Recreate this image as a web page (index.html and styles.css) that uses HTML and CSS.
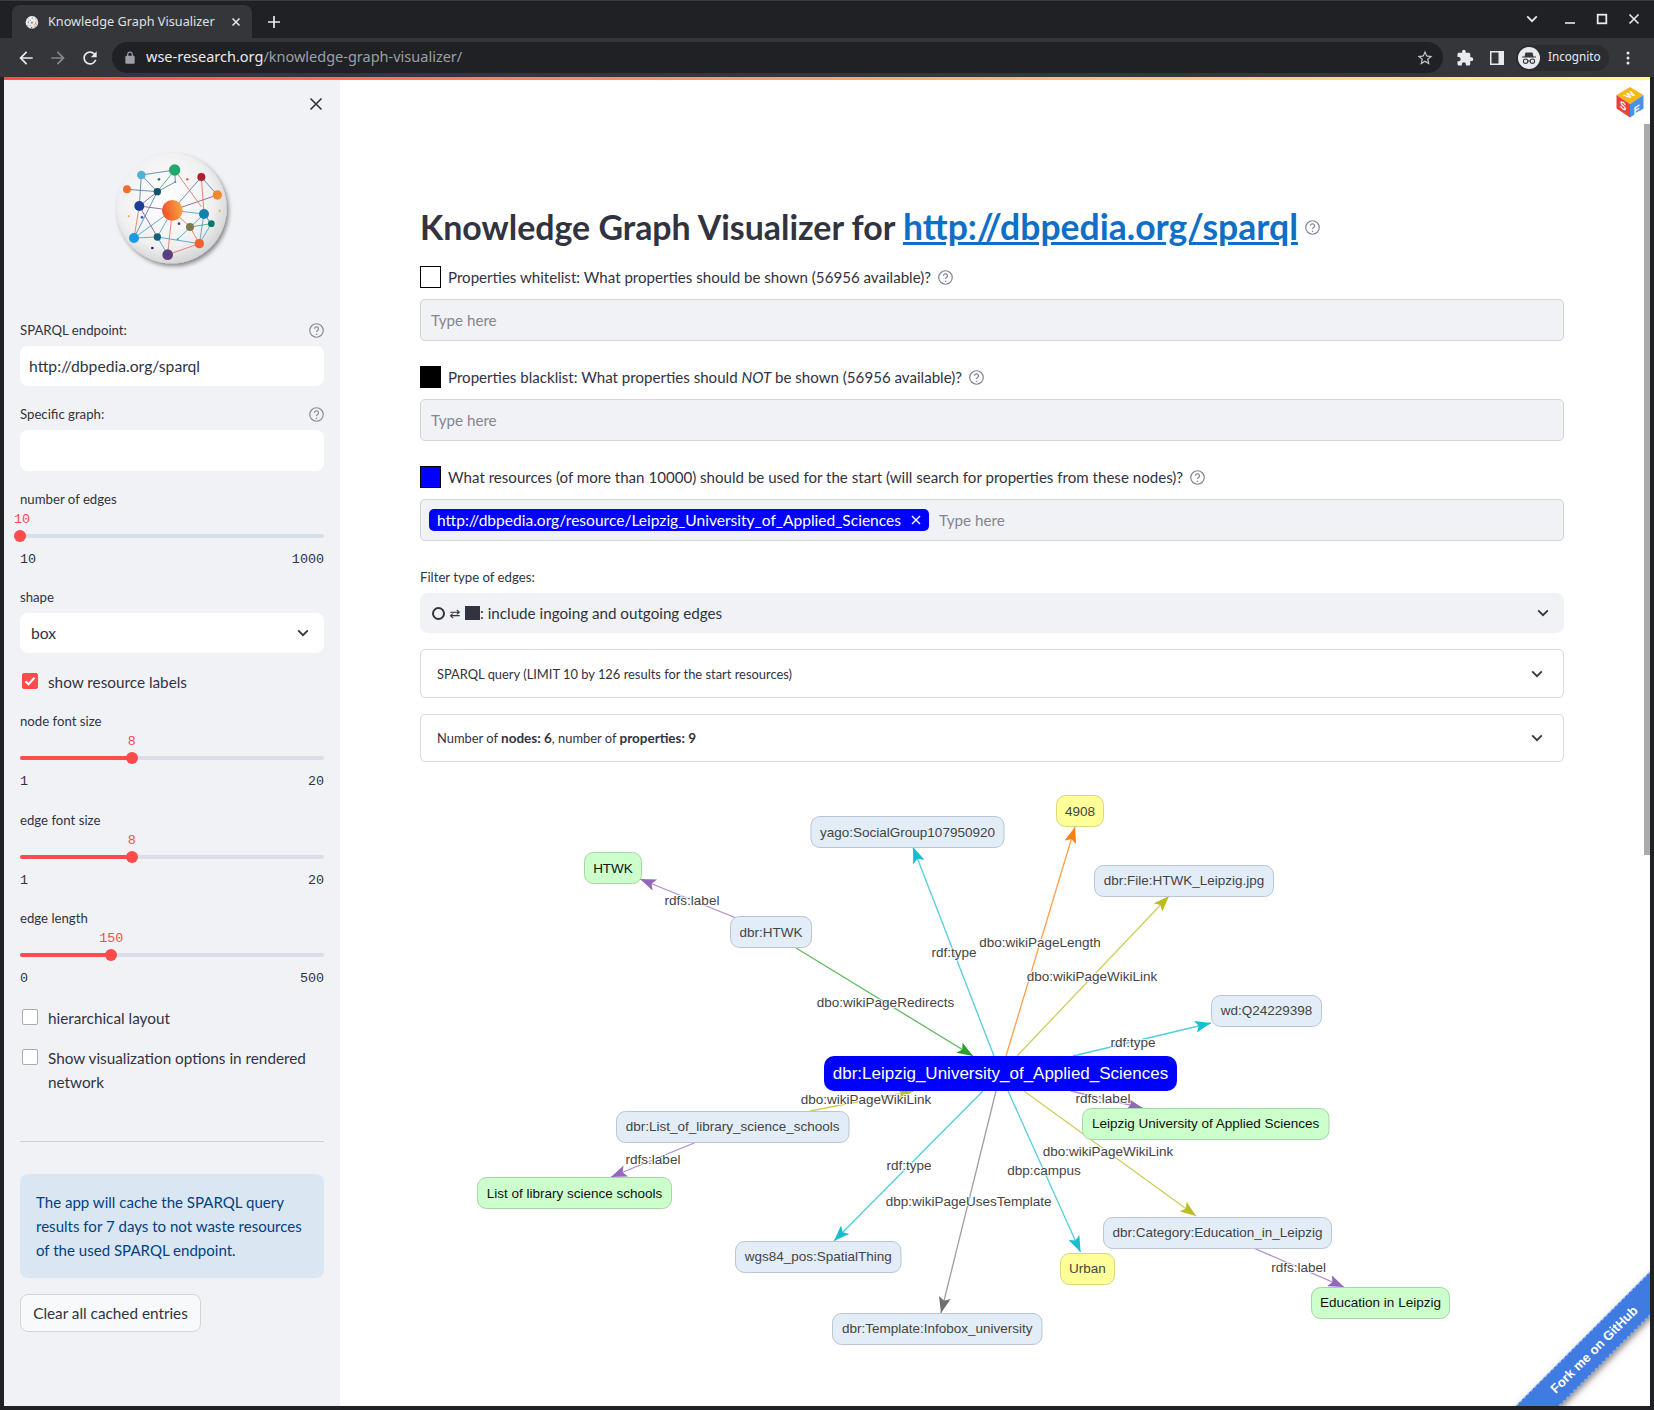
FILE: index.html
```html
<!DOCTYPE html>
<html lang="en">
<head>
    <meta charset="UTF-8">
    <title>Knowledge Graph Visualizer</title>
    <link rel="stylesheet" href="styles.css">
</head>
<body>
    <svg class="defs" width="0" height="0">
        <defs>
            <radialGradient id="discFill" cx="45%" cy="42%" r="62%">
                <stop offset="0" stop-color="#ffffff"/>
                <stop offset="0.7" stop-color="#f0f0f0"/>
                <stop offset="1" stop-color="#cfcfcf"/>
            </radialGradient>
            <linearGradient id="hubFill" x1="0" y1="0.6" x2="1" y2="0.4">
                <stop offset="0" stop-color="#ef4f2b"/>
                <stop offset="1" stop-color="#f9a63f"/>
            </linearGradient>
            <filter id="discShadow" x="-20%" y="-20%" width="150%" height="150%">
                <feDropShadow dx="6" dy="8" stdDeviation="6" flood-color="#000" flood-opacity="0.45"/>
            </filter>
            <symbol id="graphLogo" viewBox="6 0 420 390">
                <circle cx="215" cy="205" r="165" fill="url(#discFill)" filter="url(#discShadow)"/>
                <g stroke-width="2.5" fill="none">
                    <path stroke="#4d7ea8" d="M124 105L224 90M124 105L172 155M224 90L226 126L172 155M81 148L172 155M118 198L124 105M102 294L172 155M304 111L217 211M304 111L352 165"/>
                    <path stroke="#3da877" d="M172 155L224 90M270 261L334 251"/>
                    <path stroke="#7a5a90" d="M118 198L217 211M118 198L172 291M352 165L217 211M312 222L334 251M118 198L172 155"/>
                    <path stroke="#e2705e" d="M304 111L312 222M224 90L304 200M118 198L102 294M217 211L203 344M298 311L203 344M270 261L217 211M298 311L270 261"/>
                    <path stroke="#4d9ac4" d="M102 294L217 211M102 294L172 291L298 311M172 291L217 211M312 222L217 211M312 222L233 298M172 291L203 344M312 222L298 311M334 251L298 311"/>
                </g>
                <circle cx="124" cy="105" r="13" fill="#4fb3d8"/>
                <circle cx="224" cy="90" r="17" fill="#22a86a"/>
                <circle cx="304" cy="111" r="12" fill="#b51c2c"/>
                <circle cx="352" cy="165" r="14" fill="#f08a2c"/>
                <circle cx="81" cy="148" r="12" fill="#f0702a"/>
                <circle cx="172" cy="155" r="11" fill="#15506e"/>
                <circle cx="118" cy="198" r="15" fill="#1c3f94"/>
                <circle cx="217" cy="211" r="31" fill="url(#hubFill)"/>
                <circle cx="312" cy="222" r="15" fill="#0d83b0"/>
                <circle cx="334" cy="251" r="10" fill="#0b7a6e"/>
                <circle cx="270" cy="261" r="12" fill="#7a7a4a"/>
                <circle cx="102" cy="294" r="15" fill="#1a9be0"/>
                <circle cx="172" cy="291" r="11" fill="#15607a"/>
                <circle cx="298" cy="311" r="14" fill="#f0602a"/>
                <circle cx="203" cy="344" r="16" fill="#5a3f80"/>
                <circle cx="177" cy="118" r="4" fill="#2a7a60"/>
                <circle cx="262" cy="118" r="4" fill="#e66a5a"/>
                <circle cx="86" cy="229" r="3" fill="#f0a050"/>
                <circle cx="126" cy="232" r="4" fill="#2060b0"/>
                <circle cx="237" cy="251" r="4" fill="#503080"/>
                <circle cx="359" cy="212" r="3" fill="#f0a040"/>
                <circle cx="157" cy="324" r="4" fill="#203060"/>
                <circle cx="226" cy="126" r="3" fill="#4a90c0"/>
                <circle cx="233" cy="298" r="3" fill="#4a90c0"/>
            </symbol>
            <symbol id="helpIcon" viewBox="0 0 24 24">
                <circle cx="12" cy="12" r="10.800" fill="none" stroke="currentColor" stroke-width="1.900"/>
                <path d="M8.800 9.300a3.200 3.200 0 1 1 4.900 2.700c-1.100.7-1.700 1.300-1.700 2.500" fill="none" stroke="currentColor" stroke-width="2"/>
                <circle cx="12" cy="18" r="1.300" fill="currentColor"/>
            </symbol>
            <symbol id="chevron" viewBox="0 0 12 8">
                <path d="M1.200 1.400L6 6.200l4.800-4.800" fill="none" stroke="currentColor" stroke-width="1.800"/>
            </symbol>
        </defs>
    </svg>

    <div class="window">
        <div class="tabstrip">
            <div class="tab">
                <svg class="tab-favicon" width="16" height="16"><use href="#graphLogo"/></svg>
                <span class="tab-title">Knowledge Graph Visualizer</span>
                <svg class="tab-close" width="10" height="10" viewBox="0 0 10 10"><path d="M1.500 1.500l7 7M8.500 1.500l-7 7" stroke="#e8eaed" stroke-width="1.500"/></svg>
            </div>
            <svg class="tab-new" width="14" height="14" viewBox="0 0 14 14"><path d="M7 1v12M1 7h12" stroke="#e8eaed" stroke-width="1.700"/></svg>
            <div class="window-buttons">
                <svg width="12" height="8" class="win-search"><use href="#chevron"/></svg>
                <svg width="12" height="12" viewBox="0 0 12 12"><path d="M1 10h10" stroke="#e8eaed" stroke-width="1.600"/></svg>
                <svg width="12" height="12" viewBox="0 0 12 12"><rect x="1.700" y="1.700" width="8.600" height="8.600" fill="none" stroke="#e8eaed" stroke-width="1.800"/></svg>
                <svg width="12" height="12" viewBox="0 0 12 12"><path d="M1.500 1.500l9 9M10.500 1.500l-9 9" stroke="#e8eaed" stroke-width="1.600"/></svg>
            </div>
        </div>

        <div class="toolbar">
            <div class="tool-btn"><svg width="20" height="20" viewBox="0 0 24 24"><path fill="#e8eaed" d="M20 11H7.830l5.590-5.590L12 4l-8 8 8 8 1.410-1.410L7.830 13H20v-2z"/></svg></div>
            <div class="tool-btn"><svg width="20" height="20" viewBox="0 0 24 24"><path fill="#85878b" d="M4 11h12.170l-5.590-5.590L12 4l8 8-8 8-1.410-1.410L16.170 13H4v-2z"/></svg></div>
            <div class="tool-btn"><svg width="20" height="20" viewBox="0 0 24 24"><path fill="#e8eaed" d="M17.650 6.350A7.958 7.958 0 0 0 12 4c-4.420 0-7.990 3.580-7.990 8s3.570 8 7.990 8c3.730 0 6.840-2.550 7.730-6h-2.080A5.990 5.990 0 0 1 12 18c-3.310 0-6-2.690-6-6s2.690-6 6-6c1.660 0 3.140.690 4.220 1.780L13 11h7V4l-2.350 2.350z"/></svg></div>
            <div class="omnibox">
                <svg class="omni-lock" width="14" height="14" viewBox="0 0 24 24"><path fill="#9aa0a6" d="M18 8h-1V6c0-2.760-2.240-5-5-5S7 3.240 7 6v2H6c-1.100 0-2 .9-2 2v10c0 1.100.9 2 2 2h12c1.100 0 2-.9 2-2V10c0-1.100-.9-2-2-2zM9 6c0-1.660 1.340-3 3-3s3 1.340 3 3v2H9V6z"/></svg>
                <span class="omni-url">wse-research.org<span class="omni-path">/knowledge-graph-visualizer/</span></span>
                <svg class="omni-star" width="18" height="18" viewBox="0 0 24 24"><path fill="#c4c7cb" d="M22 9.240l-7.190-.62L12 2 9.190 8.630 2 9.240l5.460 4.730L5.820 21 12 17.270 18.180 21l-1.630-7.030L22 9.240zM12 15.400l-3.760 2.270 1-4.280-3.320-2.880 4.380-.38L12 6.100l1.710 4.040 4.380.38-3.320 2.880 1 4.280L12 15.400z"/></svg>
            </div>
            <div class="tool-btn"><svg width="18" height="18" viewBox="0 0 24 24"><path fill="#e8eaed" d="M20.500 11H19V7c0-1.100-.9-2-2-2h-4V3.500a2.500 2.500 0 0 0-5 0V5H4c-1.100 0-1.990.9-1.990 2v3.800H3.500c1.490 0 2.700 1.210 2.700 2.700s-1.210 2.700-2.700 2.700H2V20c0 1.100.9 2 2 2h3.800v-1.500c0-1.490 1.210-2.700 2.700-2.700 1.490 0 2.700 1.210 2.700 2.700V22H17c1.100 0 2-.9 2-2v-4h1.500a2.500 2.500 0 0 0 0-5z"/></svg></div>
            <div class="tool-btn"><svg width="14" height="14" viewBox="0 0 14 14"><rect width="14" height="14" fill="#e8eaed"/><rect x="1.500" y="1.500" width="7" height="11" fill="#35363a"/></svg></div>
            <div class="profile">
                <svg width="22" height="22" viewBox="0 0 22 22">
                    <circle cx="11" cy="11" r="11" fill="#e8eaed"/>
                    <path fill="#35363a" d="M7.500 5.500h7l1 4h2.500v1H4v-1h2.500z"/>
                    <circle cx="7.600" cy="14.200" r="2.200" fill="none" stroke="#35363a" stroke-width="1.100"/>
                    <circle cx="14.400" cy="14.200" r="2.200" fill="none" stroke="#35363a" stroke-width="1.100"/>
                    <path d="M9.800 14h2.400" stroke="#35363a" stroke-width="1.100"/>
                </svg>
                <span class="profile-name">Incognito</span>
            </div>
            <div class="tool-btn"><svg width="4" height="14" viewBox="0 0 4 14"><circle cx="2" cy="2" r="1.500" fill="#e8eaed"/><circle cx="2" cy="7" r="1.500" fill="#e8eaed"/><circle cx="2" cy="12" r="1.500" fill="#e8eaed"/></svg></div>
        </div>

        <div class="viewport">
            <div class="decoration"></div>
            <div class="app">
                <aside class="sidebar">
                    <div class="sidebar-close">
                        <svg width="14" height="14" viewBox="0 0 14 14"><path d="M1.500 1.500l11 11M12.500 1.500l-11 11" stroke="#31333f" stroke-width="1.600"/></svg>
                    </div>
                    <svg class="sidebar-logo" width="140" height="130"><use href="#graphLogo"/></svg>

                    <div class="side-label side-label-first">
                        <span>SPARQL endpoint:</span>
                        <svg class="help help-side" width="15" height="15"><use href="#helpIcon"/></svg>
                    </div>
                    <div class="side-input">http://dbpedia.org/sparql</div>

                    <div class="side-label">
                        <span>Specific graph:</span>
                        <svg class="help help-side" width="15" height="15"><use href="#helpIcon"/></svg>
                    </div>
                    <div class="side-input side-input-tall"></div>

                    <div class="slider slider-first">
                        <div class="slider-label">number of edges</div>
                        <div class="slider-value-row"><span class="slider-value" style="left: 0.7%">10</span></div>
                        <div class="slider-track">
                            <div class="slider-fill" style="width: 0%"></div>
                            <div class="slider-thumb" style="left: 0%"></div>
                        </div>
                        <div class="slider-range"><span>10</span><span>1000</span></div>
                    </div>

                    <div class="side-label side-label-shape"><span>shape</span></div>
                    <div class="side-select">
                        <span>box</span>
                        <svg width="12" height="8"><use href="#chevron"/></svg>
                    </div>

                    <label class="check check-first">
                        <span class="check-box check-box-on">
                            <svg width="12" height="12" viewBox="0 0 12 12"><path d="M1.500 6.200l3 3 6-6.400" fill="none" stroke="#fff" stroke-width="2"/></svg>
                        </span>
                        <span>show resource labels</span>
                    </label>

                    <div class="slider slider-node">
                        <div class="slider-label">node font size</div>
                        <div class="slider-value-row"><span class="slider-value" style="left: 36.8%">8</span></div>
                        <div class="slider-track">
                            <div class="slider-fill" style="width: 36.8%"></div>
                            <div class="slider-thumb" style="left: 36.8%"></div>
                        </div>
                        <div class="slider-range"><span>1</span><span>20</span></div>
                    </div>

                    <div class="slider slider-edge">
                        <div class="slider-label">edge font size</div>
                        <div class="slider-value-row"><span class="slider-value" style="left: 36.8%">8</span></div>
                        <div class="slider-track">
                            <div class="slider-fill" style="width: 36.8%"></div>
                            <div class="slider-thumb" style="left: 36.8%"></div>
                        </div>
                        <div class="slider-range"><span>1</span><span>20</span></div>
                    </div>

                    <div class="slider">
                        <div class="slider-label">edge length</div>
                        <div class="slider-value-row"><span class="slider-value" style="left: 30%">150</span></div>
                        <div class="slider-track">
                            <div class="slider-fill" style="width: 30%"></div>
                            <div class="slider-thumb" style="left: 30%"></div>
                        </div>
                        <div class="slider-range"><span>0</span><span>500</span></div>
                    </div>

                    <label class="check check-hier">
                        <span class="check-box"></span>
                        <span>hierarchical layout</span>
                    </label>
                    <label class="check check-vis">
                        <span class="check-box"></span>
                        <span>Show visualization options in rendered network</span>
                    </label>

                    <hr class="side-rule">

                    <div class="info-box">The app will cache the SPARQL query results for 7 days to not waste resources of the used SPARQL endpoint.</div>
                    <button class="clear-button">Clear all cached entries</button>
                </aside>

                <main class="main">
                    <h1 class="title">
                        Knowledge Graph Visualizer for <a href="#">http://dbpedia.org/sparql</a>
                        <svg class="help help-title" width="15" height="15"><use href="#helpIcon"/></svg>
                    </h1>

                    <div class="field-label field-label-first">
                        <span class="swatch swatch-white"></span>
                        <span>Properties whitelist: What properties should be shown (56956 available)?</span>
                        <svg class="help" width="15" height="15"><use href="#helpIcon"/></svg>
                    </div>
                    <div class="multiselect"><span class="placeholder">Type here</span></div>

                    <div class="field-label">
                        <span class="swatch swatch-black"></span>
                        <span>Properties blacklist: What properties should <em>NOT</em> be shown (56956 available)?</span>
                        <svg class="help" width="15" height="15"><use href="#helpIcon"/></svg>
                    </div>
                    <div class="multiselect"><span class="placeholder">Type here</span></div>

                    <div class="field-label">
                        <span class="swatch swatch-blue"></span>
                        <span>What resources (of more than 10000) should be used for the start (will search for properties from these nodes)?</span>
                        <svg class="help" width="15" height="15"><use href="#helpIcon"/></svg>
                    </div>
                    <div class="multiselect multiselect-tagged">
                        <span class="tag">
                            <span>http://dbpedia.org/resource/Leipzig_University_of_Applied_Sciences</span>
                            <svg width="10" height="10" viewBox="0 0 10 10"><path d="M1 1l8 8M9 1l-8 8" stroke="#fff" stroke-width="1.400"/></svg>
                        </span>
                        <span class="placeholder">Type here</span>
                    </div>

                    <div class="filter-label">Filter type of edges:</div>
                    <div class="filter-select">
                        <span class="filter-value">
                            <span class="glyph-circle"></span>
                            <span class="glyph-arrows">⇄</span>
                            <span class="glyph-square"></span>
                            <span>: include ingoing and outgoing edges</span>
                        </span>
                        <svg width="12" height="8"><use href="#chevron"/></svg>
                    </div>

                    <div class="expander expander-query">
                        <span>SPARQL query (LIMIT 10 by 126 results for the start resources)</span>
                        <svg width="12" height="8"><use href="#chevron"/></svg>
                    </div>
                    <div class="expander expander-stats">
                        <span>Number of <strong>nodes: 6</strong>, number of <strong>properties: 9</strong></span>
                        <svg width="12" height="8"><use href="#chevron"/></svg>
                    </div>

                    <svg class="graph" width="1143" height="620" viewBox="420 780 1143 620">
                        <defs>
                            <marker id="arrowPurple" markerUnits="userSpaceOnUse" viewBox="0 0 16 12" refX="16" refY="6" markerWidth="16" markerHeight="12" orient="auto"><path class="arrow-purple" d="M16 6L0 0l3.500 6L0 12z"/></marker>
                            <marker id="arrowGreen" markerUnits="userSpaceOnUse" viewBox="0 0 16 12" refX="16" refY="6" markerWidth="16" markerHeight="12" orient="auto"><path class="arrow-green" d="M16 6L0 0l3.500 6L0 12z"/></marker>
                            <marker id="arrowCyan" markerUnits="userSpaceOnUse" viewBox="0 0 16 12" refX="16" refY="6" markerWidth="16" markerHeight="12" orient="auto"><path class="arrow-cyan" d="M16 6L0 0l3.500 6L0 12z"/></marker>
                            <marker id="arrowOrange" markerUnits="userSpaceOnUse" viewBox="0 0 16 12" refX="16" refY="6" markerWidth="16" markerHeight="12" orient="auto"><path class="arrow-orange" d="M16 6L0 0l3.500 6L0 12z"/></marker>
                            <marker id="arrowOlive" markerUnits="userSpaceOnUse" viewBox="0 0 16 12" refX="16" refY="6" markerWidth="16" markerHeight="12" orient="auto"><path class="arrow-olive" d="M16 6L0 0l3.500 6L0 12z"/></marker>
                            <marker id="arrowGray" markerUnits="userSpaceOnUse" viewBox="0 0 16 12" refX="16" refY="6" markerWidth="16" markerHeight="12" orient="auto"><path class="arrow-gray" d="M16 6L0 0l3.500 6L0 12z"/></marker>
                        </defs>

                        <!-- edges -->
                        <line class="edge edge-purple" marker-end="url(#arrowPurple)" x1="736" y1="919" x2="640" y2="880"/>
                        <line class="edge edge-green" marker-end="url(#arrowGreen)" x1="796" y1="949" x2="973" y2="1057"/>
                        <line class="edge edge-cyan" marker-end="url(#arrowCyan)" x1="994" y1="1057" x2="913" y2="848"/>
                        <line class="edge edge-orange" marker-end="url(#arrowOrange)" x1="1006" y1="1057" x2="1075" y2="828"/>
                        <line class="edge edge-olive" marker-end="url(#arrowOlive)" x1="1017" y1="1057" x2="1169" y2="897"/>
                        <line class="edge edge-cyan" marker-end="url(#arrowCyan)" x1="1073" y1="1057" x2="1211" y2="1024"/>
                        <line class="edge edge-olive" marker-end="url(#arrowOlive)" x1="810" y1="1112" x2="913.500" y2="1092"/>
                        <line class="edge edge-purple" marker-end="url(#arrowPurple)" x1="696.500" y1="1143" x2="611" y2="1178"/>
                        <line class="edge edge-cyan" marker-end="url(#arrowCyan)" x1="983" y1="1092" x2="834" y2="1242"/>
                        <line class="edge edge-gray" marker-end="url(#arrowGray)" x1="996" y1="1092" x2="941" y2="1314"/>
                        <line class="edge edge-cyan" marker-end="url(#arrowCyan)" x1="1008" y1="1092" x2="1080.500" y2="1253"/>
                        <line class="edge edge-olive" marker-end="url(#arrowOlive)" x1="1024" y1="1092" x2="1196" y2="1217"/>
                        <line class="edge edge-purple" marker-end="url(#arrowPurple)" x1="1071" y1="1092" x2="1142.600" y2="1109"/>
                        <line class="edge edge-purple" marker-end="url(#arrowPurple)" x1="1253.500" y1="1249" x2="1344" y2="1288"/>

                        <!-- edge labels -->
                        <text class="edge-label" x="692" y="901">rdfs:label</text>
                        <text class="edge-label" x="954" y="953">rdf:type</text>
                        <text class="edge-label" x="1040" y="943">dbo:wikiPageLength</text>
                        <text class="edge-label" x="1092" y="977">dbo:wikiPageWikiLink</text>
                        <text class="edge-label" x="885.500" y="1003">dbo:wikiPageRedirects</text>
                        <text class="edge-label" x="1133" y="1043">rdf:type</text>
                        <text class="edge-label" x="866" y="1100">dbo:wikiPageWikiLink</text>
                        <text class="edge-label" x="1103" y="1099">rdfs:label</text>
                        <text class="edge-label" x="653" y="1160">rdfs:label</text>
                        <text class="edge-label" x="909" y="1166">rdf:type</text>
                        <text class="edge-label" x="968.600" y="1202">dbp:wikiPageUsesTemplate</text>
                        <text class="edge-label" x="1044" y="1171">dbp:campus</text>
                        <text class="edge-label" x="1108" y="1152">dbo:wikiPageWikiLink</text>
                        <text class="edge-label" x="1298.600" y="1268">rdfs:label</text>

                        <!-- nodes -->
                        <rect class="node node-resource" x="811" y="817.500" width="193" height="31" rx="9"/>
                        <text class="node-text" x="907.500" y="833">yago:SocialGroup107950920</text>
                        <rect class="node node-literal" x="584.500" y="853.500" width="57" height="31" rx="9"/>
                        <text class="node-text node-text-literal" x="613" y="869">HTWK</text>
                        <rect class="node node-resource" x="730.500" y="917.500" width="81" height="31" rx="9"/>
                        <text class="node-text" x="771" y="933">dbr:HTWK</text>
                        <rect class="node node-number" x="1056.500" y="796.500" width="47" height="31" rx="9"/>
                        <text class="node-text" x="1080" y="812">4908</text>
                        <rect class="node node-resource" x="1094.500" y="866.500" width="179" height="31" rx="9"/>
                        <text class="node-text" x="1184" y="881">dbr:File:HTWK_Leipzig.jpg</text>
                        <rect class="node node-resource" x="1211.500" y="996.500" width="110" height="31" rx="9"/>
                        <text class="node-text" x="1266.500" y="1011">wd:Q24229398</text>
                        <rect class="node node-resource" x="616.500" y="1112.500" width="232.500" height="31" rx="9"/>
                        <text class="node-text" x="732.700" y="1127">dbr:List_of_library_science_schools</text>
                        <rect class="node node-literal" x="477.500" y="1178.500" width="194" height="31" rx="9"/>
                        <text class="node-text node-text-literal" x="574.500" y="1194">List of library science schools</text>
                        <rect class="node node-resource" x="735.500" y="1242.500" width="165.500" height="31" rx="9"/>
                        <text class="node-text" x="818.200" y="1257">wgs84_pos:SpatialThing</text>
                        <rect class="node node-resource" x="832.500" y="1314.500" width="209.500" height="31" rx="9"/>
                        <text class="node-text" x="937.200" y="1329">dbr:Template:Infobox_university</text>
                        <rect class="node node-literal" x="1082.500" y="1109.500" width="246.500" height="31" rx="9"/>
                        <text class="node-text node-text-literal" x="1205.700" y="1124">Leipzig University of Applied Sciences</text>
                        <rect class="node node-resource" x="1103.500" y="1218.500" width="228" height="31" rx="9"/>
                        <text class="node-text" x="1217.500" y="1233">dbr:Category:Education_in_Leipzig</text>
                        <rect class="node node-number" x="1060.500" y="1254.500" width="54" height="31" rx="9"/>
                        <text class="node-text" x="1087.500" y="1269">Urban</text>
                        <rect class="node node-literal" x="1311.500" y="1288.500" width="138" height="31" rx="9"/>
                        <text class="node-text node-text-literal" x="1380.500" y="1303">Education in Leipzig</text>
                        <rect class="node-center" x="824" y="1057" width="353" height="35" rx="10"/>
                        <text class="node-center-text" x="1000.500" y="1074.500">dbr:Leipzig_University_of_Applied_Sciences</text>
                    </svg>
                </main>
            </div>

            <!-- things lying over the page -->
            <svg class="wse-logo" width="28" height="31" viewBox="0 0 28 31">
                <path class="wse-top" d="M14 0l13.500 8L14 17 .5 8z"/>
                <path class="wse-left" d="M.5 8L14 17v13.500L.5 21.500z"/>
                <path class="wse-right" d="M27.500 8L14 17v13.500l13.500-9z"/>
                <text class="wse-letter" transform="matrix(.75 -.45 .75 .45 16.600 9.600)">W</text>
                <text class="wse-letter" transform="matrix(.85 .55 0 1 7.200 22.500)">S</text>
                <text class="wse-letter" transform="matrix(.85 -.55 0 1 20.800 26.500)">E</text>
            </svg>
            <div class="scroll-thumb"></div>
            <div class="ribbon-clip">
                <a class="ribbon" href="#"><span>Fork me on GitHub</span></a>
            </div>
        </div>
    </div>
</body>
</html>
```

FILE: styles.css
```css
* {
    box-sizing: border-box;
}
html, body {
    margin: 0;
    padding: 0;
}
body {
    width: 1654px;
    height: 1410px;
    overflow: hidden;
    background-color: #202124;
    font-family: "Lato", "Noto Sans", sans-serif;
    color: #31333f;
}
.defs {
    position: absolute;
}
.window {
    display: flex;
    flex-direction: column;
    height: 100%;
}

/* browser chrome */
.tabstrip {
    height: 38px;
    display: flex;
    align-items: flex-end;
    padding-left: 12px;
    border-top: 1px solid #3c3d40;
    color: #e8eaed;
}
.tab {
    width: 240px;
    height: 33px;
    background: #35363a;
    border-radius: 8px 8px 0 0;
    display: flex;
    align-items: center;
    padding: 0 11px 0 12px;
}
.tab-favicon {
    flex: none;
}
.tab-title {
    margin-left: 8px;
    padding-bottom: 2px;
    font: 12.700px "Noto Sans", sans-serif;
    color: #dfe1e5;
    white-space: nowrap;
    flex: 1;
}
.tab-new {
    margin: 0 0 9px 15px;
}
.window-buttons {
    margin-left: auto;
    width: 128px;
    height: 37px;
    display: flex;
    align-items: center;
    gap: 20px;
    margin-bottom: 1px;
}
.win-search {
    margin-right: 6px;
}
.toolbar {
    height: 39px;
    background: #35363a;
    display: flex;
    align-items: center;
    padding-left: 10px;
    padding-right: 10px;
}
.tool-btn {
    width: 32px;
    height: 32px;
    display: flex;
    align-items: center;
    justify-content: center;
    flex: none;
}
.omnibox {
    flex: 1;
    height: 31px;
    margin: 0 6px;
    background: #202124;
    border-radius: 16px;
    display: flex;
    align-items: center;
    padding: 0 9px 0 11px;
    font: 14.500px "Noto Sans", sans-serif;
}
.omni-url {
    margin-left: 9px;
    padding-bottom: 4px;
    color: #e8eaed;
    flex: 1;
}
.omni-path {
    color: #9aa0a6;
}
.profile {
    width: 93px;
    height: 26px;
    margin: 0 3px;
    border-radius: 13px;
    background: #2b2c2f;
    display: flex;
    align-items: center;
    padding-left: 2px;
    flex: none;
    color: #e8eaed;
    font: 11.700px "Noto Sans", sans-serif;
}
.profile svg {
    flex: none;
}
.profile-name {
    margin-left: 8px;
    padding-bottom: 4px;
}

/* page */
.viewport {
    position: relative;
    flex: 1;
    margin: 0 4px 4px;
    background: #fff;
    overflow: hidden;
    display: flex;
    flex-direction: column;
}
.decoration {
    height: 3px;
    flex: none;
    background: linear-gradient(90deg, #ff4b4b, #fffd80);
}
.app {
    flex: 1;
    display: flex;
    min-height: 0;
}

/* sidebar */
.sidebar {
    width: 336px;
    flex: none;
    background: #f0f2f6;
    padding: 0 16px;
    font-size: 13.200px;
}
.sidebar-close {
    display: flex;
    justify-content: flex-end;
    padding: 17px 1px 0 0;
    height: 31px;
}
.sidebar-logo {
    display: block;
    margin: 29px auto 0;
}
.side-label {
    display: flex;
    justify-content: space-between;
    align-items: center;
    height: 20px;
    margin-top: 18px;
    margin-bottom: 6px;
}
.side-label-first {
    margin-top: 50px;
}
.side-label-shape {
    margin-top: 19px;
}
.side-input,
.side-select {
    height: 40px;
    background: #fff;
    border-radius: 8px;
    font-size: 15.700px;
    display: flex;
    align-items: center;
    padding-left: 9px;
}
.side-input-tall {
    height: 41px;
}
.side-select {
    justify-content: space-between;
    padding: 0 15px 0 11px;
}
.help {
    color: #808495;
    flex: none;
}
.help-side {
    color: #8a8c94;
}
.slider {
    margin-top: 19px;
}
.slider-first {
    margin-top: 18px;
}
.slider-node {
    margin-top: 17px;
}
.slider-edge {
    margin-top: 20px;
}
.slider-label {
    height: 20px;
    line-height: 20px;
}
.slider-value-row {
    position: relative;
    height: 16px;
    margin-top: 1px;
}
.slider-value {
    position: absolute;
    top: 2px;
    transform: translateX(-50%);
    font: 13.400px/16px "Liberation Mono", monospace;
    color: #ff4b4b;
}
.slider-track {
    position: relative;
    height: 4px;
    margin: 8px 0 10px;
    background: #d9dee8;
    border-radius: 2px;
}
.slider-fill {
    height: 100%;
    background: #ff4b4b;
    border-radius: 2px;
}
.slider-thumb {
    position: absolute;
    top: -4px;
    width: 12px;
    height: 12px;
    margin-left: -6px;
    border-radius: 50%;
    background: #ff4b4b;
}
.slider-range {
    display: flex;
    justify-content: space-between;
    height: 20px;
    font: 13.400px/24px "Liberation Mono", monospace;
}
.check {
    display: flex;
    gap: 10px;
    padding-left: 2px;
    font-size: 15.300px;
    line-height: 24px;
}
.check-box {
    width: 16px;
    height: 16px;
    flex: none;
    margin-top: 3px;
    border-radius: 2px;
    background: #fff;
    border: 1px solid #a9abb3;
    display: flex;
    align-items: center;
    justify-content: center;
}
.check-box-on {
    background: #ff4b4b;
    border-color: #ff4b4b;
}
.check-first {
    margin-top: 17px;
}
.check-hier {
    margin-top: 19px;
}
.check-vis {
    margin-top: 16px;
}
.side-rule {
    border: none;
    border-top: 1px solid #cfd1d6;
    margin: 47px 0 0;
}
.info-box {
    margin-top: 32px;
    padding: 16px;
    background: #dbe6f3;
    color: #004280;
    border-radius: 8px;
    font-size: 15.050px;
    line-height: 24px;
}
.clear-button {
    display: block;
    margin-top: 16px;
    width: 181px;
    height: 38px;
    padding: 0;
    background: #f8f9fb;
    border: 1px solid #d5d6da;
    border-radius: 8px;
    font-family: inherit;
    font-size: 15.300px;
    color: #31333f;
}

/* main column */
.main {
    flex: 1;
    min-width: 0;
    padding: 127px 86px 0 80px;
}
.title {
    margin: 0;
    height: 40px;
    font-size: 33.900px;
    line-height: 40px;
    font-weight: 700;
    color: #31333f;
    white-space: nowrap;
}
.title a {
    color: #0f6fc6;
    font-size: 35.500px;
}
.help-title {
    vertical-align: 5px;
    margin-left: -1px;
}
.field-label {
    display: flex;
    align-items: center;
    gap: 7px;
    height: 22px;
    margin-top: 25px;
    font-size: 15.100px;
    white-space: nowrap;
}
.field-label-first {
    margin-top: 19px;
}
.swatch {
    width: 21px;
    height: 22px;
    border: 1px solid #000;
    flex: none;
}
.swatch-white {
    background: #fff;
}
.swatch-black {
    background: #000;
}
.swatch-blue {
    background: #0000ff;
}
.multiselect {
    height: 42px;
    margin-top: 11px;
    background: #f0f2f6;
    border: 1px solid #d3d5da;
    border-radius: 5px;
    display: flex;
    align-items: center;
    padding-left: 10px;
    font-size: 15.200px;
}
.multiselect-tagged {
    padding-left: 8px;
    gap: 10px;
}
.placeholder {
    color: #85868f;
}
.tag {
    height: 22px;
    padding: 0 8px;
    background: #0000ff;
    color: #fff;
    border-radius: 5px;
    display: flex;
    align-items: center;
    gap: 10px;
    font-size: 15.550px;
}
.filter-label {
    height: 20px;
    line-height: 20px;
    margin-top: 26px;
    font-size: 13.200px;
}
.filter-select {
    height: 40px;
    margin-top: 6px;
    background: #f0f2f6;
    border-radius: 8px;
    display: flex;
    align-items: center;
    justify-content: space-between;
    padding: 0 15px 0 12px;
    font-size: 15.200px;
}
.filter-value {
    display: flex;
    align-items: center;
}
.glyph-circle {
    width: 13px;
    height: 13px;
    border: 2px solid #31333f;
    border-radius: 50%;
}
.glyph-arrows {
    width: 20px;
    text-align: center;
    font: 13px "DejaVu Sans", sans-serif;
}
.glyph-square {
    width: 15px;
    height: 14px;
    background: #31333f;
}
.expander {
    margin-top: 16px;
    background: #fff;
    border: 1px solid #d9dadd;
    border-radius: 5px;
    display: flex;
    align-items: center;
    justify-content: space-between;
    padding: 0 20px 0 16px;
    font-size: 12.900px;
}
.expander strong {
    font-size: 13.500px;
}
.expander-query {
    height: 49px;
}
.expander-stats {
    height: 48px;
}
.graph {
    display: block;
    margin-top: 17px;
}

/* graph */
.edge {
    stroke-width: 1.300;
    stroke-opacity: 0.75;
}
.edge-purple { stroke: #9467bd; }
.edge-green { stroke: #2ca02c; }
.edge-cyan { stroke: #17becf; }
.edge-orange { stroke: #ff7f0e; }
.edge-olive { stroke: #bcbd22; }
.edge-gray { stroke: #7f7f7f; }
.arrow-purple { fill: #9467bd; }
.arrow-green { fill: #2ca02c; }
.arrow-cyan { fill: #17becf; }
.arrow-orange { fill: #ff7f0e; }
.arrow-olive { fill: #bcbd22; }
.arrow-gray { fill: #6f6f6f; }
.edge-label,
.node-text,
.node-center-text {
    font-family: "Liberation Sans", Arial, sans-serif;
    text-anchor: middle;
    dominant-baseline: central;
}
.edge-label {
    font-size: 13.500px;
    fill: #444;
    stroke: #fff;
    stroke-width: 2px;
    stroke-opacity: 0.8;
    paint-order: stroke;
}
.node {
    stroke-width: 1;
}
.node-resource {
    fill: #e3edf8;
    stroke: #b9c5d4;
}
.node-literal {
    fill: #ccffcc;
    stroke: #a5d6a5;
}
.node-number {
    fill: #ffff99;
    stroke: #d8d880;
}
.node-center {
    fill: #0000ff;
}
.node-text {
    font-size: 13.500px;
    fill: #444;
}
.node-text-literal {
    fill: #111;
}
.node-center-text {
    font-size: 17px;
    fill: #fff;
}

/* overlays */
.wse-logo {
    position: absolute;
    top: 10px;
    right: 6px;
}
.wse-top { fill: #f5b818; }
.wse-left { fill: #e8433a; }
.wse-right { fill: #4a8fe8; }
.wse-letter {
    font: bold 11px "Liberation Sans", sans-serif;
    fill: #fff;
    text-anchor: middle;
}
.scroll-thumb {
    position: absolute;
    right: 0;
    top: 47px;
    width: 6px;
    height: 731px;
    background: #aaa;
}
.ribbon-clip {
    position: absolute;
    right: 0;
    bottom: 0;
    width: 150px;
    height: 150px;
    overflow: hidden;
}
.ribbon {
    position: absolute;
    right: -93.500px;
    bottom: 41.500px;
    width: 300px;
    height: 31px;
    transform: rotate(-45deg);
    background: #3f7be0;
    box-shadow: 0 3px 6px rgba(0,0,0,0.45);
    display: flex;
    align-items: center;
    justify-content: center;
    color: #fff;
    font: bold 13px "Liberation Sans", sans-serif;
    text-decoration: none;
    border-top: 1px dashed rgba(255,255,255,0.45);
    border-bottom: 1px dashed rgba(255,255,255,0.45);
}
```
